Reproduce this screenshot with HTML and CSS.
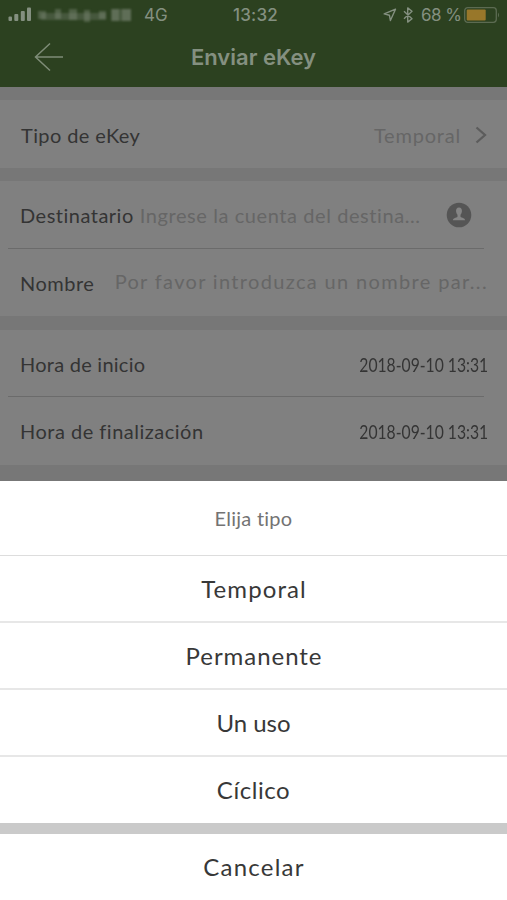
FILE: index.html
```html
<!DOCTYPE html>
<html lang="es">
<head>
<meta charset="utf-8">
<title>Enviar eKey</title>
<link rel="stylesheet" href="styles.css">
</head>
<body>
<div class="screen">
  <header class="header">
    <div class="status">
      <svg class="signal" width="24" height="15" viewBox="0 0 24 15"><rect x="0.5" y="9.5" width="3.5" height="4.5" rx="1"/><rect x="6.3" y="7" width="4" height="7" rx="1"/><rect x="12.8" y="4" width="4" height="10" rx="1"/><rect x="19" y="0.5" width="4" height="13.5" rx="1"/></svg>
      <svg class="carrier" width="96" height="16" viewBox="0 0 96 16"><path opacity=".4" d="M0 4h8v8H0zM17 2h6v10h-6zM31 2h8v11h-8zM46 3h6v12h-6zM61 4h7v8h-7zM73 2h8v12h-8zM84 2h9v12h-9z"/><path opacity=".3" d="M3 6h65v7H3zM74 2h19v12H74z"/></svg>
      <span class="network">4G</span>
      <span class="clock">13:32</span>
      <div class="status-right">
        <svg class="location" width="14" height="14" viewBox="0 0 14 14"><path d="M12.5 1.2 1.2 5.900l5.200 1.300 1 5.300z"/></svg>
        <svg class="bluetooth" width="10" height="16" viewBox="0 0 10 16"><path d="m1 4.300 8 7.400-4.300 3.400V.9L9 4.300l-8 7.400"/></svg>
        <span class="percent">68 %</span>
        <svg class="battery" width="36" height="16" viewBox="0 0 36 16"><rect class="case" x=".7" y=".7" width="31.6" height="14.6" rx="3"/><rect class="charge" x="2.7" y="2.5" width="19" height="11" rx="1"/><path class="tip" d="M34 5.500q2 2.500 0 5z"/></svg>
      </div>
    </div>
    <div class="nav">
      <svg class="back" width="30" height="30" viewBox="0 0 30 30"><path d="M29 15H1M16 1.500 1.500 15 16 28.500"/></svg>
      <h1 class="title">Enviar eKey</h1>
    </div>
  </header>
  <main class="form">
    <section class="group">
      <div class="row row-type"><span class="label l-type">Tipo de eKey</span><span class="hint h-type">Temporal</span>
        <svg class="chevron" width="12" height="18" viewBox="0 0 12 18"><path d="m1.500 1.500 8.500 7.500-8.500 7.500"/></svg></div>
    </section>
    <section class="group">
      <div class="row"><span class="label l-dest">Destinatario</span><span class="hint h-dest">Ingrese la cuenta del destina...</span>
        <svg class="contact" width="26" height="26" viewBox="0 0 26 26"><circle cx="13" cy="13" r="12.3"/><path d="M13 5.500c-2.200 0-3.200 1.700-2.900 4 .2 1.700.8 2.500 1.400 3.200v2c-1.500 1.200-4.200 1-4.700 3.600h12.400c-.5-2.600-3.200-2.400-4.700-3.600v-2c.6-.7 1.200-1.500 1.400-3.200.3-2.300-.7-4-2.900-4z"/></svg></div>
      <div class="row"><span class="label l-name">Nombre</span><span class="hint h-name">Por favor introduzca un nombre par...</span></div>
    </section>
    <section class="group">
      <div class="row"><span class="label l-start">Hora de inicio</span><span class="date">2018-09-10 13:31</span></div>
      <div class="row"><span class="label l-end">Hora de finalización</span><span class="date">2018-09-10 13:31</span></div>
    </section>
  </main>
  <div class="sheet">
    <div class="sheet-title"><span class="s-title">Elija tipo</span></div>
    <div class="option"><span class="o-temp">Temporal</span></div>
    <div class="option"><span class="o-perm">Permanente</span></div>
    <div class="option"><span class="o-once">Un uso</span></div>
    <div class="option"><span class="o-cycle">Cíclico</span></div>
    <div class="cancel"><span class="o-cancel">Cancelar</span></div>
  </div>
</div>
</body>
</html>
```
FILE: styles.css
```css
* { box-sizing: border-box; }
body { margin: 0; font-family: Lato, sans-serif; font-variant-ligatures: none; }
.screen { width: 507px; height: 900px; display: flex; flex-direction: column; background: #777; overflow: hidden; white-space: nowrap; }
svg { display: block; flex: none; }

.header { height: 87px; flex: none; background: #2c4120; color: #849080; font-family: Inter, sans-serif; }
.status { height: 29px; display: flex; align-items: center; padding: 0 7px 0 8px; }
.signal { fill: #849080; }
.carrier { margin-left: 6px; fill: #849080; filter: blur(1.3px); }
.network { width: 99px; padding-left: 10px; font-size: 17px; }
.clock { font-size: 17px; font-weight: 500; letter-spacing: .2px; }
.status-right { display: flex; align-items: center; margin-left: auto; }
.location, .bluetooth { fill: none; stroke: #849080; stroke-width: 1.4; stroke-linejoin: round; }
.bluetooth { margin: 0 8px 0 6px; }
.percent { font-size: 17px; width: 43px; letter-spacing: -.5px; }
.case { fill: none; stroke: #5c6b52; stroke-width: 1.3; }
.charge { fill: #98772a; }
.tip { fill: #5c6b52; }
.nav { height: 56px; display: grid; grid-template-columns: 64px 1fr 64px; align-items: center; }
.back { margin-left: 34px; fill: none; stroke: #7e8c77; stroke-width: 1.5; }
.title { margin: 0; text-align: center; font-size: 22px; font-weight: 600; }

.form { display: flex; flex-direction: column; gap: 13.5px; padding-top: 13px; height: 394px; flex: none; }
.group { background: #808080; }
.row { height: 67.5px; display: flex; align-items: center; padding: 1px 19px 0 20px; font-size: 20px; position: relative; }
.row-type { padding-top: 3px; }
.row + .row::before { content: ""; position: absolute; top: -1px; left: 8px; right: 23px; height: 1px; background: #6b6b6b; }
.label { color: #343434; }
.hint { color: #666; }
.l-type { margin-left: 1px; letter-spacing: .4px; }
.l-dest { letter-spacing: .5px; }
.l-name { letter-spacing: .5px; }
.l-start { letter-spacing: .25px; }
.l-end { letter-spacing: .5px; }
.h-type { margin-left: auto; letter-spacing: .8px; }
.chevron { margin-left: 14px; margin-right: 1px; fill: none; stroke: #5c5c5c; stroke-width: 2.3; }
.h-dest { margin-left: 6px; letter-spacing: .58px; padding-bottom: 1px; }
.contact { margin: 0 16px 0 auto; }
.contact circle { fill: #555; }
.contact path { fill: #858585; }
.h-name { margin-left: auto; letter-spacing: 1.34px; padding-bottom: 3px; }
.date { margin-left: auto; color: #343434; transform: scaleX(.785); transform-origin: right center; }

.sheet { flex: 1; background: #fff; display: flex; flex-direction: column; text-align: center; color: #383838; font-size: 24px; }
.sheet-title, .option, .cancel { display: flex; align-items: center; justify-content: center; }
.sheet-title { height: 75px; color: #737373; font-size: 20px; border-bottom: 1px solid #ddd; }
.option { height: 67px; border-bottom: 2px solid #e7e7e7; }
.option:nth-last-child(2) { border-bottom: 11px solid #cacaca; height: 77px; padding-bottom: 2px; }
.cancel { flex: 1; padding-bottom: 1px; }
.s-title { letter-spacing: .25px; }
.o-temp { letter-spacing: 1.1px; margin-right: -1px; }
.o-perm { letter-spacing: .95px; margin-right: -1px; }
.o-cycle { letter-spacing: .55px; }
.o-cancel { letter-spacing: 1.25px; margin-right: -1px; }
```
